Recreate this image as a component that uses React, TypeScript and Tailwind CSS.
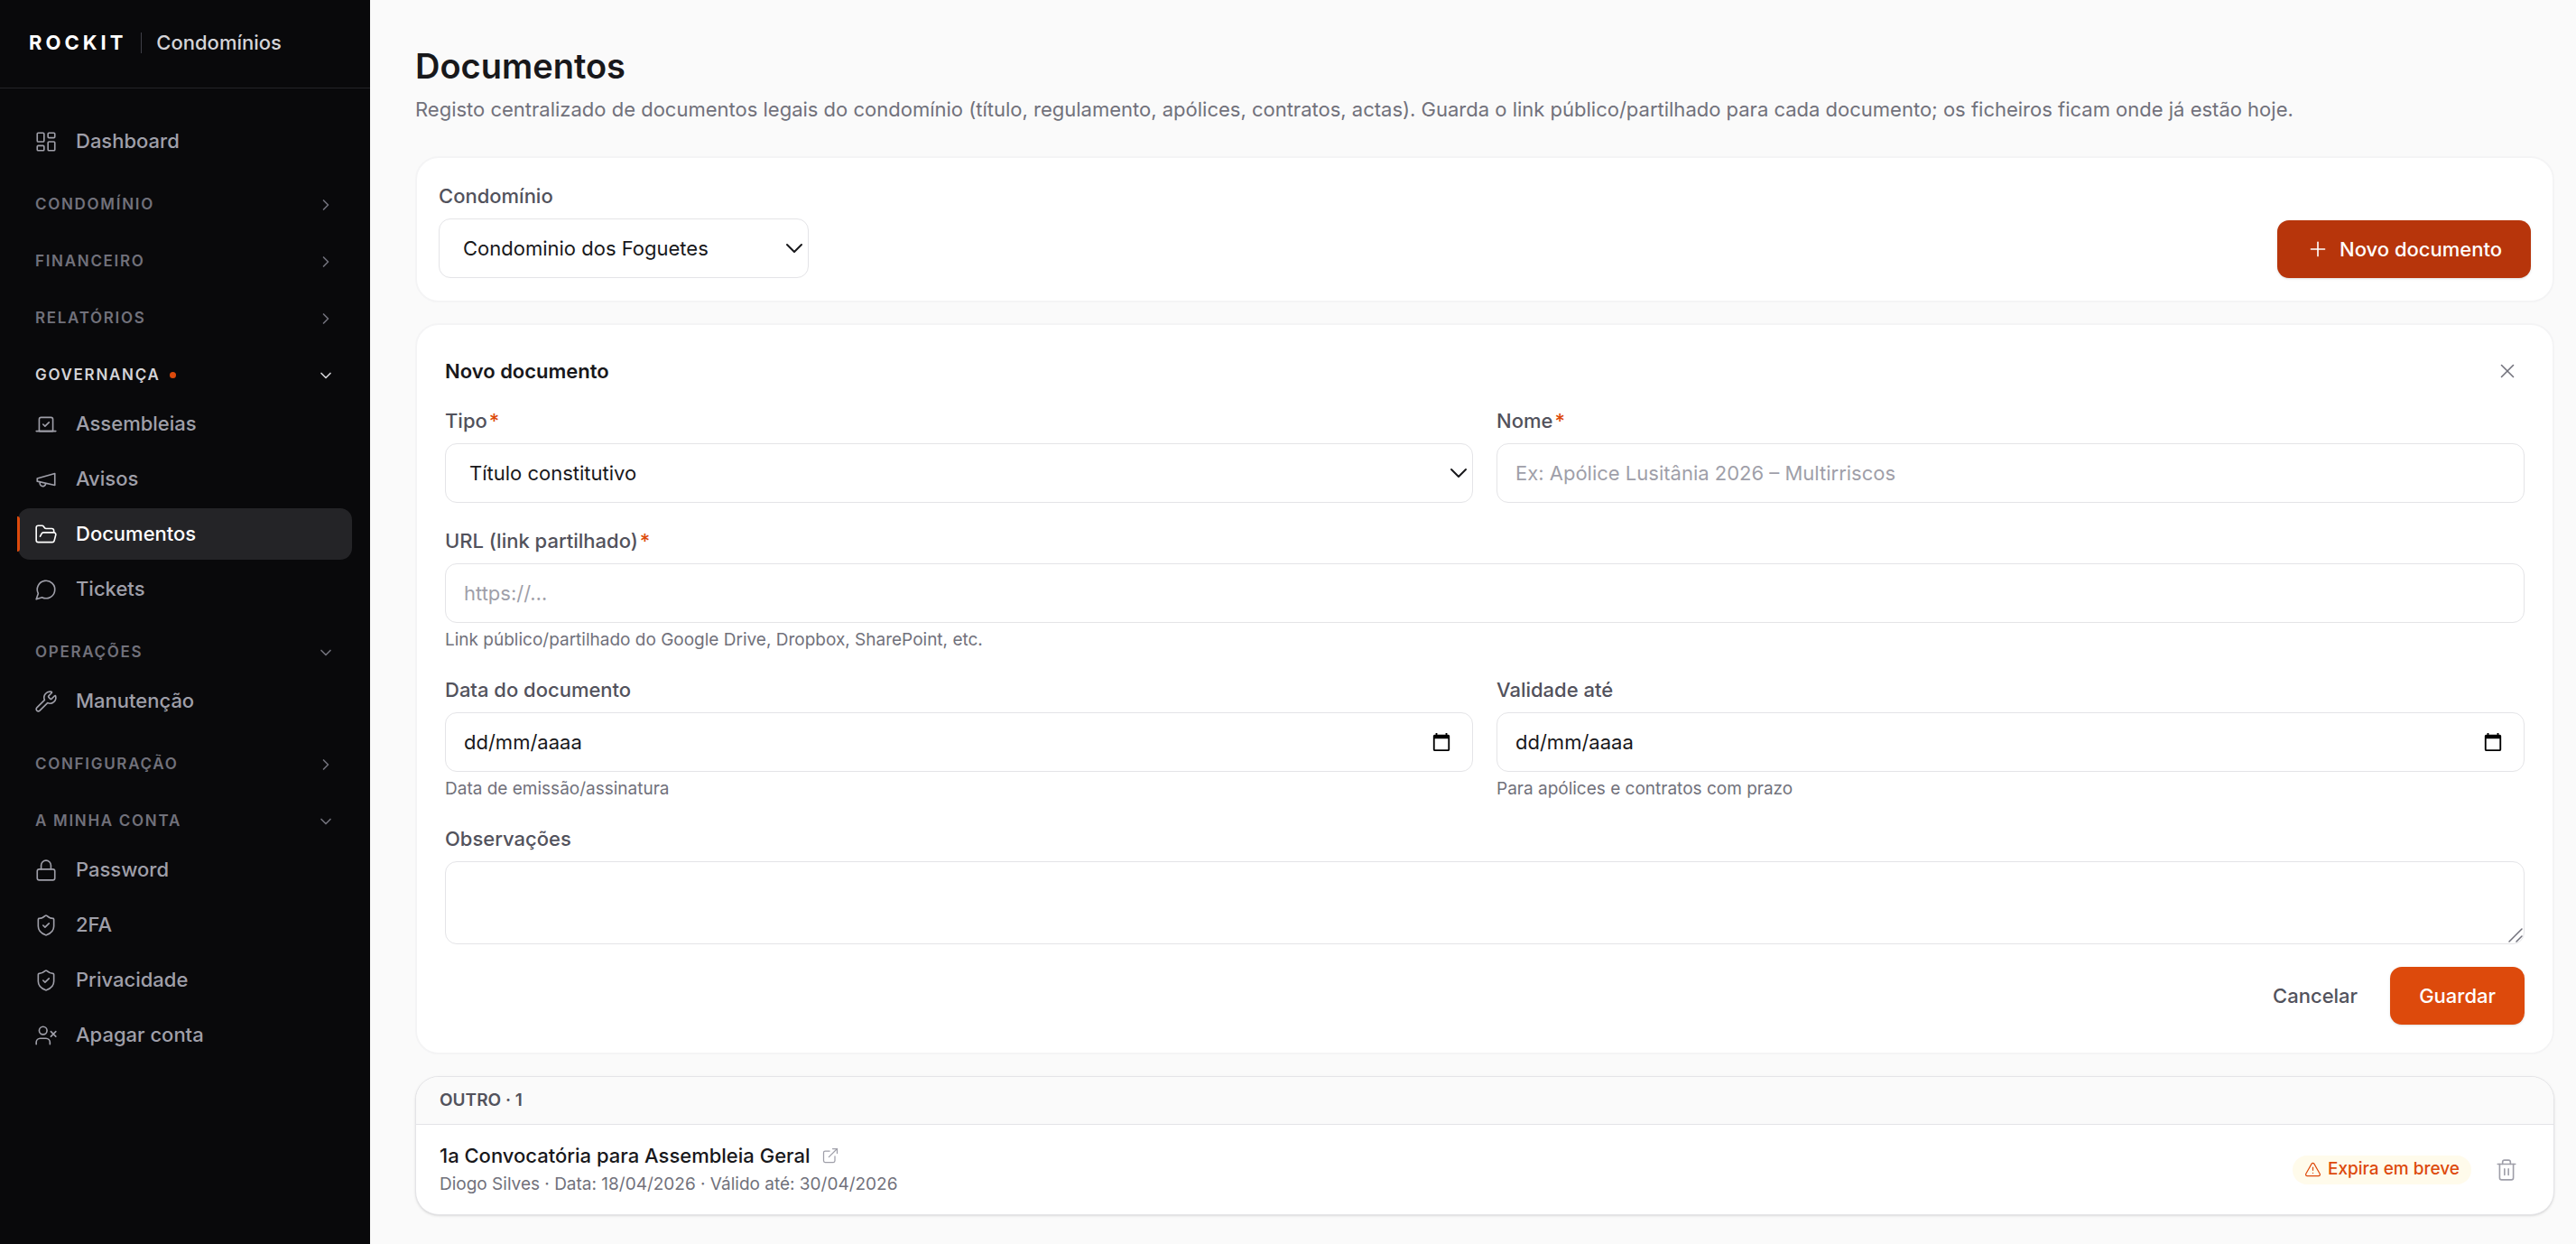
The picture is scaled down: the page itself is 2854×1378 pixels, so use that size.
import { useState } from "react";
import type { ReactNode } from "react";
import {
  ChevronDown,
  ChevronRight,
  ExternalLink,
  FolderOpen,
  LayoutDashboard,
  Lock,
  Plus,
  ShieldCheck,
  Trash2,
  TriangleAlert,
  UserX,
  Vote,
  Wrench,
  X,
} from "lucide-react";

const fieldClass =
  "block w-full h-[66px] rounded-[13px] border border-zinc-200 bg-white text-[22px] text-zinc-900";

function MegaphoneIcon() {
  return (
    <svg className="size-[26px]" viewBox="0 0 24 24" fill="none" stroke="currentColor" strokeWidth={1.5} strokeLinecap="round" strokeLinejoin="round">
      <path d="m3 11 18-5v12L3 14v-3z" />
      <path d="M11.6 16.8a3 3 0 1 1-5.8-1.6" />
    </svg>
  );
}

function MessageIcon() {
  return (
    <svg className="size-[26px]" viewBox="0 0 24 24" fill="none" stroke="currentColor" strokeWidth={1.5} strokeLinecap="round" strokeLinejoin="round">
      <path d="M7.9 20A9 9 0 1 0 4 16.1L2 22Z" />
    </svg>
  );
}

function CalendarIcon() {
  return (
    <svg className="size-[22px]" viewBox="0 0 24 24" fill="currentColor">
      <path d="M20 3h-1V1h-2v2H7V1H5v2H4c-1.1 0-2 .9-2 2v16c0 1.1.9 2 2 2h16c1.1 0 2-.9 2-2V5c0-1.1-.9-2-2-2zm0 18H4V8h16v13z" />
    </svg>
  );
}

const iconProps = { size: 26, strokeWidth: 1.5 };

const groups = [
  { title: "Condomínio", open: false, items: [] },
  { title: "Financeiro", open: false, items: [] },
  { title: "Relatórios", open: false, items: [] },
  {
    title: "Governança",
    open: true,
    current: true,
    items: [
      { label: "Assembleias", icon: <Vote {...iconProps} /> },
      { label: "Avisos", icon: <MegaphoneIcon /> },
      { label: "Documentos", icon: <FolderOpen {...iconProps} />, active: true },
      { label: "Tickets", icon: <MessageIcon /> },
    ],
  },
  {
    title: "Operações",
    open: true,
    items: [{ label: "Manutenção", icon: <Wrench {...iconProps} /> }],
  },
  { title: "Configuração", open: false, items: [] },
  {
    title: "A minha conta",
    open: true,
    items: [
      { label: "Password", icon: <Lock {...iconProps} /> },
      { label: "2FA", icon: <ShieldCheck {...iconProps} /> },
      { label: "Privacidade", icon: <ShieldCheck {...iconProps} /> },
      { label: "Apagar conta", icon: <UserX {...iconProps} /> },
    ],
  },
] as {
  title: string;
  open: boolean;
  current?: boolean;
  items: { label: string; icon: ReactNode; active?: boolean }[];
}[];

function NavItem({ label, icon, active }: { label: string; icon: ReactNode; active?: boolean }) {
  return (
    <a
      href="#"
      aria-current={active ? "page" : undefined}
      className={`relative flex h-[57px] items-center gap-5 rounded-[13px] px-[18px] text-[22px] font-medium ${
        active ? "bg-[#242427] text-white" : "text-zinc-400 hover:text-white"
      }`}
    >
      {active && <span className="absolute -left-px top-[9px] bottom-[9px] w-[3px] rounded-r bg-[#dd4a0c]" />}
      {icon}
      {label}
    </a>
  );
}

function Sidebar() {
  return (
    <aside className="w-[410px] shrink-0 bg-[#09090b]">
      <div className="flex h-[98px] items-center border-b border-[#242427] px-8 pb-[2px]">
        <span className="text-[22px] font-bold tracking-[4px] text-white">ROCKIT</span>
        <span className="ml-4 mr-4 h-[23px] w-px bg-zinc-700" />
        <span className="text-[22px] font-medium text-zinc-300">Condomínios</span>
      </div>
      <nav className="px-5 pt-[30px]">
        <NavItem label="Dashboard" icon={<LayoutDashboard {...iconProps} />} />
        {groups.map((group) => (
          <div key={group.title} className="mt-5">
            <button
              type="button"
              aria-expanded={group.open}
              className={`flex h-[43px] w-full items-center px-[19px] text-[17px] font-semibold uppercase tracking-widest ${
                group.current ? "text-zinc-300" : "text-zinc-500"
              }`}
            >
              {group.title}
              {group.current && <span className="ml-[10px] size-[7px] rounded-full bg-[#dd4a0c]" />}
              <span className="ml-auto">
                {group.open ? <ChevronDown size={20} /> : <ChevronRight size={20} />}
              </span>
            </button>
            {group.items.length > 0 && (
              <div className="mt-1 flex flex-col gap-1">
                {group.items.map((item) => (
                  <NavItem key={item.label} {...item} />
                ))}
              </div>
            )}
          </div>
        ))}
      </nav>
    </aside>
  );
}

function Field({
  id,
  label,
  required,
  hint,
  children,
}: {
  id: string;
  label: string;
  required?: boolean;
  hint?: string;
  children: ReactNode;
}) {
  return (
    <div>
      <label htmlFor={id} className="mb-[9px] flex h-8 items-center gap-0.5 text-[22px] font-medium text-zinc-600">
        {label}
        {required && <span className="text-[#dd4a0c]">*</span>}
      </label>
      {children}
      {hint && <p className="mt-[6px] text-[19px] leading-[26px] text-zinc-500">{hint}</p>}
    </div>
  );
}

function Select({ id, options }: { id: string; options: string[] }) {
  return (
    <div className="relative">
      <select id={id} className={`${fieldClass} appearance-none pl-[26px] pr-12`}>
        {options.map((option) => (
          <option key={option}>{option}</option>
        ))}
      </select>
      <ChevronDown size={32} strokeWidth={1.5} className="pointer-events-none absolute right-0 top-[17px] text-zinc-900" />
    </div>
  );
}

function DateInput({ id }: { id: string }) {
  return (
    <div className="relative">
      <input id={id} type="text" placeholder="dd/mm/aaaa" className={`${fieldClass} px-5 placeholder:text-zinc-900`} />
      <button type="button" aria-label="Abrir calendário" className="absolute right-6 top-[22px] text-black">
        <CalendarIcon />
      </button>
    </div>
  );
}

function NewDocumentForm({ onClose }: { onClose: () => void }) {
  return (
    <form className="mt-[23px] rounded-[26px] border-2 border-zinc-100 bg-white px-[31px] pt-8 pb-[31px]" onSubmit={(e) => e.preventDefault()}>
      <div className="flex h-[38px] items-center justify-between">
        <h2 className="text-[22px] font-semibold text-zinc-900">Novo documento</h2>
        <button type="button" aria-label="Fechar" className="p-[6px] text-zinc-500" onClick={onClose}>
          <X size={26} strokeWidth={1.5} />
        </button>
      </div>
      <div className="mt-5 grid grid-cols-2 gap-[26px]">
        <Field id="tipo" label="Tipo" required>
          <Select id="tipo" options={["Título constitutivo", "Regulamento", "Apólice", "Contrato", "Acta", "Outro"]} />
        </Field>
        <Field id="nome" label="Nome" required>
          <input id="nome" type="text" placeholder="Ex: Apólice Lusitânia 2026 – Multirriscos" className={`${fieldClass} px-5 placeholder:text-zinc-400`} />
        </Field>
        <div className="col-span-2">
          <Field id="url" label="URL (link partilhado)" required hint="Link público/partilhado do Google Drive, Dropbox, SharePoint, etc.">
            <input id="url" type="url" placeholder="https://…" className={`${fieldClass} px-5 placeholder:text-zinc-400`} />
          </Field>
        </div>
        <Field id="data" label="Data do documento" hint="Data de emissão/assinatura">
          <DateInput id="data" />
        </Field>
        <Field id="validade" label="Validade até" hint="Para apólices e contratos com prazo">
          <DateInput id="validade" />
        </Field>
        <div className="col-span-2">
          <Field id="obs" label="Observações">
            <div className="relative">
              <textarea
                id="obs"
                className="block h-[92px] w-full resize-y rounded-[13px] border border-zinc-200 px-5 py-3 text-[22px] text-zinc-900 [&::-webkit-resizer]:bg-transparent"
              />
              {/* resize grip */}
              <svg className="pointer-events-none absolute right-[2px] bottom-[2px] size-4 text-zinc-500" viewBox="0 0 16 16" stroke="currentColor" strokeWidth={1.5} strokeLinecap="round">
                <path d="M1 15 15 1M9 15l6-6" />
              </svg>
            </div>
          </Field>
        </div>
      </div>
      <div className="mt-[25px] flex justify-end gap-1">
        <button type="button" className="h-16 rounded-[13px] px-8 text-[22px] font-medium text-zinc-600" onClick={onClose}>
          Cancelar
        </button>
        <button type="submit" className="h-16 rounded-[13px] bg-[#dd4a0c] px-8 text-[22px] font-medium text-white shadow-sm">
          Guardar
        </button>
      </div>
    </form>
  );
}

function DocumentList() {
  return (
    <section className="mt-6 overflow-hidden rounded-[26px] border border-zinc-200 bg-white shadow-sm">
      <h2 className="flex h-[53px] items-center border-b border-zinc-200 bg-[#fafafa] px-[26px] text-[19px] font-semibold uppercase text-zinc-600">
        Outro · 1
      </h2>
      <div className="flex h-[99px] items-center justify-between pl-[26px] pr-[39px]">
        <div>
          <a href="#" className="flex items-center gap-3 text-[22px] leading-8 font-medium text-zinc-900">
            1a Convocatória para Assembleia Geral
            <ExternalLink size={20} strokeWidth={1.5} className="text-zinc-400" />
          </a>
          <p className="text-[19px] leading-8 text-zinc-500">Diogo Silves · Data: 18/04/2026 · Válido até: 30/04/2026</p>
        </div>
        <div className="flex items-center gap-[26px]">
          <span className="flex h-8 items-center gap-[7px] rounded-full bg-amber-50 px-[13px] text-[19px] font-medium text-[#dd4a0c]">
            <TriangleAlert size={19} strokeWidth={1.5} />
            Expira em breve
          </span>
          <button type="button" aria-label="Eliminar documento" className="text-zinc-400">
            <Trash2 size={26} strokeWidth={1.5} />
          </button>
        </div>
      </div>
    </section>
  );
}

export default function App() {
  const [showForm, setShowForm] = useState(true);

  return (
    <div className="flex min-h-screen bg-[#fafafa] font-['Inter',sans-serif]">
      <Sidebar />
      <main className="min-w-0 flex-1 pt-12 pr-6 pb-6 pl-[50px]">
        <h1 className="text-[38px] leading-[50px] font-semibold text-zinc-900">Documentos</h1>
        <p className="mt-[7px] text-[22px] leading-8 text-zinc-500">
          Registo centralizado de documentos legais do condomínio (título, regulamento, apólices, contratos, actas). Guarda o link público/partilhado para cada documento; os ficheiros ficam onde já estão hoje.
        </p>
        <div className="mt-9 flex items-end justify-between rounded-[26px] border-2 border-zinc-100 bg-white px-6 pt-[26px] pb-[25px]">
          <div className="w-[410px]">
            <Field id="condominio" label="Condomínio">
              <Select id="condominio" options={["Condominio dos Foguetes"]} />
            </Field>
          </div>
          <button type="button" className="flex h-16 items-center gap-[11px] rounded-[13px] bg-[#b7350b] px-8 text-[22px] font-medium text-white shadow-sm" onClick={() => setShowForm(true)}>
            <Plus size={26} strokeWidth={1.5} />
            Novo documento
          </button>
        </div>
        {showForm && <NewDocumentForm onClose={() => setShowForm(false)} />}
        <DocumentList />
      </main>
    </div>
  );
}
